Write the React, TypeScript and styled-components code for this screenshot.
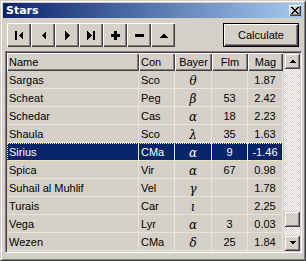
import React from 'react';
import styled, { createGlobalStyle, css } from 'styled-components';

const FACE = '#D4D0C8';

const Global = createGlobalStyle`
  html, body { margin: 0; padding: 0; background: ${FACE}; }
  body { font-family: "Liberation Sans", Arial, sans-serif; font-size: 11px; color: #000; }
`;

const raised = css`
  box-shadow: inset 1px 1px #fff, inset -1px -1px #404040, inset -2px -2px #808080;
`;

const Window = styled.div`
  width: 306px;
  height: 261px;
  box-sizing: border-box;
  background: ${FACE};
  border: 1px solid;
  border-color: ${FACE} #404040 #404040 ${FACE};
  box-shadow: inset 1px 1px #fff, inset -1px -1px #808080;
  padding: 2px;
  display: flex;
  flex-direction: column;
`;

const TitleBar = styled.div`
  height: 15px;
  flex: none;
  background: linear-gradient(to right, #0a246a, #a6caf0);
  display: flex;
  align-items: center;
  justify-content: space-between;
  padding: 0 2px 0 3px;
`;

const Title = styled.span`
  color: #fff;
  font-family: "DejaVu Sans", Verdana, sans-serif;
  font-weight: bold;
  font-size: 11px;
  line-height: 15px;
`;

const CloseBtn = styled.div`
  width: 12px;
  height: 11px;
  background: ${FACE};
  ${raised};
  display: flex;
  align-items: center;
  justify-content: center;
`;

const Toolbar = styled.div`
  height: 33px;
  flex: none;
  box-sizing: border-box;
  padding: 5px 4px 4px 4px;
  display: flex;
  justify-content: space-between;
  align-items: center;
`;

const NavGroup = styled.div`
  display: flex;
`;

const ToolButton = styled.div`
  width: 24px;
  height: 24px;
  background: ${FACE};
  ${raised};
  display: flex;
  align-items: center;
  justify-content: center;
`;

const CalcButton = styled.div`
  width: 76px;
  height: 24px;
  box-sizing: border-box;
  border: 1px solid #000;
  background: ${FACE};
  ${raised};
  display: flex;
  align-items: center;
  justify-content: center;
  font-size: 11px;
`;

const Grid = styled.div`
  height: 202px;
  flex: none;
  box-sizing: border-box;
  margin: 0 1px 0 2px;
  border: 1px solid;
  border-color: #808080 #fff #fff #808080;
  padding: 1px;
  box-shadow: inset 1px 1px #404040;
  display: flex;
  justify-content: space-between;
`;

const Table = styled.div`
  width: 276px;
  display: flex;
  flex-direction: column;
`;

const Row = styled.div<{ $sel?: boolean }>`
  display: flex;
  height: 18px;
  flex: none;
  position: relative;
  ${(p) =>
    p.$sel &&
    css`
      background: #0a246a;
      color: #fff;
      outline: 1px dotted #f0e68c;
      outline-offset: -1px;
    `}
`;

const HeadCell = styled.div<{ $w: number; $align: string }>`
  width: ${(p) => p.$w}px;
  height: 18px;
  box-sizing: border-box;
  ${raised};
  display: flex;
  align-items: center;
  justify-content: ${(p) => p.$align};
  padding: 0 2px 1px 2px;
  white-space: nowrap;
`;

const Cell = styled.div<{ $w: number; $align: string; $greek?: boolean }>`
  width: ${(p) => p.$w}px;
  height: 18px;
  box-sizing: border-box;
  border-right: 1px solid #e6e4df;
  border-bottom: 1px solid #e6e4df;
  display: flex;
  align-items: center;
  justify-content: ${(p) => p.$align};
  padding: 0 2px 0 2px;
  white-space: nowrap;
  overflow: hidden;
  ${(p) =>
    p.$greek &&
    css`
      font-family: "DejaVu Serif", "Liberation Serif", serif;
      font-style: italic;
      font-size: 12px;
      padding-top: 3px;
    `}
`;

const ScrollBar = styled.div`
  width: 16px;
  display: flex;
  flex-direction: column;
`;

const ScrollBtn = styled.div<{ $h?: number }>`
  width: 16px;
  height: ${(p) => p.$h ?? 16}px;
  flex: none;
  background: ${FACE};
  box-shadow: inset 1px 1px ${FACE}, inset -1px -1px #404040, inset 2px 2px #fff, inset -2px -2px #808080;
  display: flex;
  align-items: center;
  justify-content: center;
`;

const Track = styled.div`
  flex: 1;
  display: flex;
  flex-direction: column;
  justify-content: flex-end;
  padding-bottom: 8px;
  background: repeating-conic-gradient(#fff 0 25%, ${FACE} 0 50%) 0 0 / 2px 2px;
`;

const cols = [
  { key: 'name', title: 'Name', w: 132, head: 'flex-start', align: 'flex-start' },
  { key: 'con', title: 'Con', w: 36, head: 'flex-start', align: 'flex-start' },
  { key: 'bayer', title: 'Bayer', w: 37, head: 'center', align: 'center' },
  { key: 'flm', title: 'Flm', w: 36, head: 'center', align: 'center' },
  { key: 'mag', title: 'Mag', w: 35, head: 'center', align: 'center' },
] as const;

type Star = { name: string; con: string; bayer: string; flm: string; mag: string; sel?: boolean };

const stars: Star[] = [
  { name: 'Sargas', con: 'Sco', bayer: 'θ', flm: '', mag: '1.87' },
  { name: 'Scheat', con: 'Peg', bayer: 'β', flm: '53', mag: '2.42' },
  { name: 'Schedar', con: 'Cas', bayer: 'α', flm: '18', mag: '2.23' },
  { name: 'Shaula', con: 'Sco', bayer: 'λ', flm: '35', mag: '1.63' },
  { name: 'Sirius', con: 'CMa', bayer: 'α', flm: '9', mag: '-1.46', sel: true },
  { name: 'Spica', con: 'Vir', bayer: 'α', flm: '67', mag: '0.98' },
  { name: 'Suhail al Muhlif', con: 'Vel', bayer: 'γ', flm: '', mag: '1.78' },
  { name: 'Turais', con: 'Car', bayer: 'ι', flm: '', mag: '2.25' },
  { name: 'Vega', con: 'Lyr', bayer: 'α', flm: '3', mag: '0.03' },
  { name: 'Wezen', con: 'CMa', bayer: 'δ', flm: '25', mag: '1.84' },
];

const Icon = ({ children, w, h }: { children: React.ReactNode; w: number; h: number }) => (
  <svg width={w} height={h} viewBox={`0 0 ${w} ${h}`} shapeRendering="crispEdges">
    {children}
  </svg>
);

export default function App() {
  return (
    <>
      <Global />
      <Window>
        <TitleBar>
          <Title>Stars</Title>
          <CloseBtn>
            <Icon w={8} h={7}>
              <path d="M0 0h2v1h1v1h2v-1h1v-1h2v1h-1v1h-1v1h-1v1h1v1h1v1h1v1h-2v-1h-1v-1h-2v1h-1v1h-2v-1h1v-1h1v-1h1v-1h-1v-1h-1v-1h-1z" fill="#000" />
            </Icon>
          </CloseBtn>
        </TitleBar>
        <Toolbar>
          <NavGroup>
            <ToolButton>
              <Icon w={8} h={9}>
                <rect x={0} y={0} width={2} height={9} fill="#000" />
                <polygon points="8,0 3.5,4.5 8,9" fill="#000" />
              </Icon>
            </ToolButton>
            <ToolButton>
              <Icon w={5} h={9}>
                <polygon points="5,0 0.5,4.5 5,9" fill="#000" />
              </Icon>
            </ToolButton>
            <ToolButton>
              <Icon w={5} h={9}>
                <polygon points="0,0 4.5,4.5 0,9" fill="#000" />
              </Icon>
            </ToolButton>
            <ToolButton>
              <Icon w={8} h={9}>
                <polygon points="0,0 4.5,4.5 0,9" fill="#000" />
                <rect x={6} y={0} width={2} height={9} fill="#000" />
              </Icon>
            </ToolButton>
            <ToolButton>
              <Icon w={9} h={9}>
                <rect x={3} y={0} width={3} height={9} fill="#000" />
                <rect x={0} y={3} width={9} height={3} fill="#000" />
              </Icon>
            </ToolButton>
            <ToolButton>
              <Icon w={9} h={3}>
                <rect x={0} y={0} width={9} height={3} fill="#000" />
              </Icon>
            </ToolButton>
            <ToolButton>
              <Icon w={9} h={5}>
                <polygon points="0,5 4.5,0.5 9,5" fill="#000" />
              </Icon>
            </ToolButton>
          </NavGroup>
          <CalcButton>Calculate</CalcButton>
        </Toolbar>
        <Grid>
          <Table>
            <Row>
              {cols.map((c) => (
                <HeadCell key={c.key} $w={c.w} $align={c.head}>
                  {c.title}
                </HeadCell>
              ))}
            </Row>
            {stars.map((s) => (
              <Row key={s.name} $sel={s.sel}>
                {cols.map((c) => (
                  <Cell key={c.key} $w={c.w} $align={c.align} $greek={c.key === 'bayer'}>
                    {s[c.key]}
                  </Cell>
                ))}
              </Row>
            ))}
          </Table>
          <ScrollBar>
            <ScrollBtn>
              <Icon w={7} h={4}>
                <polygon points="0,4 3.5,0.5 7,4" fill="#000" />
              </Icon>
            </ScrollBtn>
            <Track>
              <ScrollBtn />
            </Track>
            <ScrollBtn>
              <Icon w={7} h={4}>
                <polygon points="0,0 3.5,3.5 7,0" fill="#000" />
              </Icon>
            </ScrollBtn>
          </ScrollBar>
        </Grid>
      </Window>
    </>
  );
}
